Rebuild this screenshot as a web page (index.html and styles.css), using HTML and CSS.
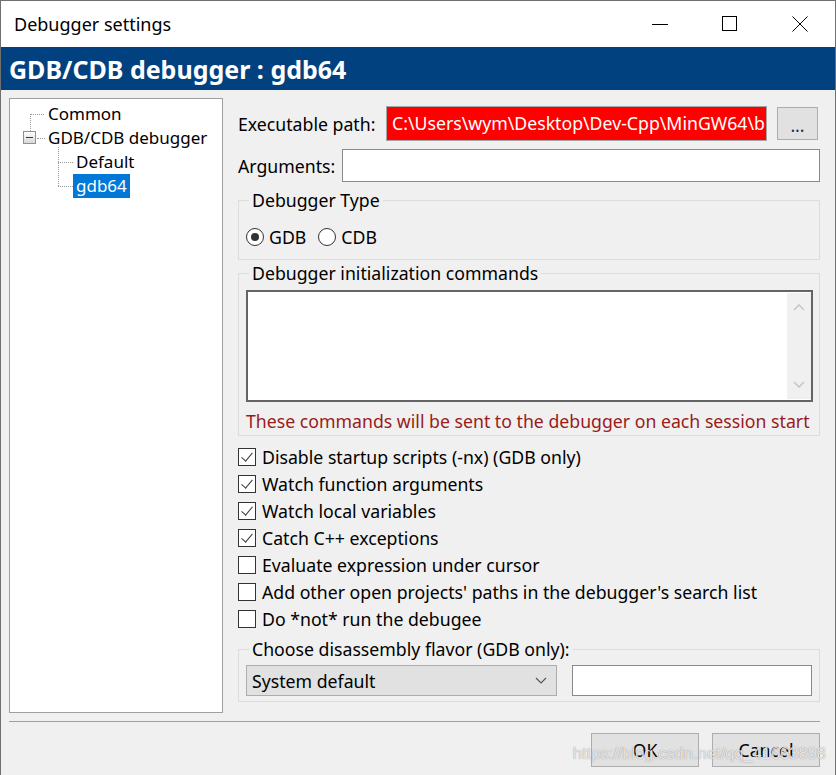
FILE: index.html
```html
<!DOCTYPE html>
<html lang="en">
<head>
    <meta charset="UTF-8">
    <title>Debugger settings</title>
    <link rel="stylesheet" href="styles.css">
</head>
<body>
<div class="window">
    <div class="titlebar">
        <span class="title">Debugger settings</span>
        <div class="caption-btn">
            <svg width="16" height="16" viewBox="0 0 16 16"><line x1="0" y1="8.5" x2="16" y2="8.5" stroke="#000" stroke-width="1"/></svg>
        </div>
        <div class="caption-btn">
            <svg width="16" height="16" viewBox="0 0 16 16"><rect x="0.5" y="0.5" width="14" height="14" fill="none" stroke="#000" stroke-width="1"/></svg>
        </div>
        <div class="caption-btn">
            <svg width="16" height="16" viewBox="0 0 16 16"><path d="M0.5 0.5 L15.5 15.5 M15.5 0.5 L0.5 15.5" stroke="#000" stroke-width="1" fill="none"/></svg>
        </div>
    </div>

    <div class="header">GDB/CDB debugger : gdb64</div>

    <div class="content">
        <div class="main">
            <div class="tree">
                <div class="node level1 first"><span class="label">Common</span></div>
                <div class="node level1 expanded"><span class="expander"></span><span class="label">GDB/CDB debugger</span></div>
                <div class="children">
                    <div class="node level2"><span class="label">Default</span></div>
                    <div class="node level2"><span class="label selected">gdb64</span></div>
                </div>
            </div>

            <div class="settings">
                <div class="row exec-row">
                    <span class="exec-label">Executable path:</span>
                    <div class="edit exec-path">C:\Users\wym\Desktop\Dev-Cpp\MinGW64\bin\gdb.exe</div>
                    <div class="button browse">...</div>
                </div>
                <div class="row args-row">
                    <span class="args-label">Arguments:</span>
                    <div class="edit args"></div>
                </div>

                <fieldset class="group type-group">
                    <legend>Debugger Type</legend>
                    <div class="radios">
                        <span class="radio checked"><span class="radio-circle"></span>GDB</span>
                        <span class="radio"><span class="radio-circle"></span>CDB</span>
                    </div>
                </fieldset>

                <fieldset class="group init-group">
                    <legend>Debugger initialization commands</legend>
                    <div class="memo">
                        <div class="memo-text"></div>
                        <div class="scrollbar">
                            <svg width="12" height="8" viewBox="0 0 12 8"><polyline points="1,7 6,2 11,7" fill="none" stroke="#c2c2c2" stroke-width="1.3"/></svg>
                            <svg width="12" height="8" viewBox="0 0 12 8"><polyline points="1,1 6,6 11,1" fill="none" stroke="#c2c2c2" stroke-width="1.3"/></svg>
                        </div>
                    </div>
                    <div class="hint">These commands will be sent to the debugger on each session start</div>
                </fieldset>

                <div class="checks">
                    <div class="check checked"><span class="box"></span>Disable startup scripts (-nx) (GDB only)</div>
                    <div class="check checked"><span class="box"></span>Watch function arguments</div>
                    <div class="check checked"><span class="box"></span>Watch local variables</div>
                    <div class="check checked"><span class="box"></span>Catch C++ exceptions</div>
                    <div class="check"><span class="box"></span>Evaluate expression under cursor</div>
                    <div class="check"><span class="box"></span>Add other open projects' paths in the debugger's search list</div>
                    <div class="check"><span class="box"></span>Do *not* run the debugee</div>
                </div>

                <fieldset class="group flavor-group">
                    <legend>Choose disassembly flavor (GDB only):</legend>
                    <div class="flavor-row">
                        <div class="combo">
                            <span>System default</span>
                            <svg width="12" height="8" viewBox="0 0 12 8"><polyline points="1,1 6,6 11,1" fill="none" stroke="#555" stroke-width="1.2"/></svg>
                        </div>
                        <div class="edit flavor-edit"></div>
                    </div>
                </fieldset>
            </div>
        </div>

        <div class="separator"></div>

        <div class="buttons">
            <div class="button">OK</div>
            <div class="button">Cancel</div>
        </div>
    </div>

    <div class="watermark">https://blog.csdn.net/qq_41663898</div>
</div>
</body>
</html>
```

FILE: styles.css
```css
* {
    box-sizing: border-box;
}

html, body {
    margin: 0;
    padding: 0;
}

body {
    width: 836px;
    height: 775px;
    overflow: hidden;
    font-family: "Noto Sans", "Open Sans", sans-serif;
    font-size: 17.7px;
    color: #000;
    background: #f0f0f0;
}

.window {
    position: relative;
    height: 775px;
    border: 1px solid #707070;
    border-bottom: none;
    background: #f0f0f0;
}

/* title bar */
.titlebar {
    height: 46px;
    background: #fff;
    display: flex;
    align-items: center;
}

.title {
    flex: 1;
    padding-left: 13px;
    font-size: 18px;
}

.caption-btn {
    width: 70px;
    height: 46px;
    display: flex;
    align-items: center;
    justify-content: center;
}

.caption-btn svg {
    display: block;
}

.header {
    height: 43px;
    background: #02417f;
    color: #fff;
    font-weight: bold;
    font-size: 25px;
    padding-left: 8px;
    display: flex;
    align-items: center;
}

.content {
    padding: 8px 15px 0 8px;
}

.main {
    display: flex;
    gap: 15px;
    height: 615px;
}

/* tree */
.tree {
    width: 214px;
    background: #fff;
    border: 1px solid #a0a0a0;
    padding-top: 3px;
    font-size: 17px;
}

.node {
    position: relative;
    height: 24px;
    display: flex;
    align-items: center;
}

.level1 {
    padding-left: 35px;
}

.level2 {
    padding-left: 63px;
}

.label {
    padding: 0 3px;
    line-height: 24px;
}

.label.selected {
    background: #0078d7;
    color: #fff;
}

.node::before {
    content: "";
    position: absolute;
    top: 12px;
    left: 20px;
    width: 14px;
    border-top: 1px dotted #9a9a9a;
}

.node.expanded::before {
    left: 27px;
    width: 8px;
}

.node.first::after {
    content: "";
    position: absolute;
    left: 20px;
    top: 12px;
    height: 17px;
    border-left: 1px dotted #9a9a9a;
}

.expander {
    position: absolute;
    left: 13px;
    top: 5px;
    width: 13px;
    height: 13px;
    border: 1px solid #919191;
    background: linear-gradient(#ffffff, #d8d8d8);
}

.expander::after {
    content: "";
    position: absolute;
    left: 2px;
    top: 5px;
    width: 7px;
    height: 1px;
    background: #1f3a66;
}

.children {
    position: relative;
}

.children::before {
    content: "";
    position: absolute;
    left: 48px;
    top: -3px;
    bottom: 12px;
    border-left: 1px dotted #9a9a9a;
}

.level2::before {
    left: 48px;
    width: 15px;
}

/* settings column */
.settings {
    flex: 1;
    padding-top: 8px;
}

.row {
    display: flex;
    align-items: center;
}

.exec-row {
    height: 35px;
}

.exec-label {
    width: 148px;
}

.edit {
    background: #fff;
    border: 1px solid #8a8a8a;
}

.exec-path {
    width: 381px;
    height: 35px;
    background: #ff0000;
    border-color: #a5a5a5;
    color: #fff;
    padding-left: 5px;
    line-height: 33px;
    white-space: nowrap;
    overflow: hidden;
}

.button {
    background: #e1e1e1;
    border: 1px solid #adadad;
    display: flex;
    align-items: center;
    justify-content: center;
}

.browse {
    width: 41px;
    height: 33px;
    margin-left: 10px;
    padding-top: 2px;
    color: #1c2f55;
}

.args-row {
    margin-top: 8px;
    height: 33px;
}

.args-label {
    width: 104px;
}

.args {
    flex: 1;
    height: 33px;
}

/* group boxes */
.group {
    margin: 0;
    border: 1px solid #dcdcdc;
    padding: 0 6px 0 7px;
    min-width: 0;
}

.group legend {
    padding: 0 3px;
    margin-left: 3px;
    line-height: 20px;
}

.type-group {
    margin-top: 8px;
    padding-top: 17px;
    padding-bottom: 12px;
}

.radios {
    display: flex;
    align-items: center;
    height: 20px;
}

.radio {
    display: flex;
    align-items: center;
    gap: 5px;
}

.radio + .radio {
    margin-left: 12px;
}

.radio-circle {
    width: 18px;
    height: 18px;
    border: 1px solid #333;
    border-radius: 50%;
    background: #fff;
    display: flex;
    align-items: center;
    justify-content: center;
}

.radio.checked .radio-circle::after {
    content: "";
    width: 8px;
    height: 8px;
    border-radius: 50%;
    background: #333;
}

.init-group {
    margin-top: 3px;
    padding-top: 7px;
    padding-bottom: 4px;
}

.memo {
    height: 112px;
    background: #fff;
    border: 2px solid #646464;
    display: flex;
}

.memo-text {
    flex: 1;
}

.scrollbar {
    width: 24px;
    margin: 1px 0;
    background: #f0f0f0;
    display: flex;
    flex-direction: column;
    justify-content: space-between;
    align-items: center;
    padding: 10px 0;
}

.scrollbar svg {
    display: block;
}

.hint {
    margin-top: 9px;
    line-height: 20px;
    color: #9a1b1b;
    white-space: nowrap;
}

/* check boxes */
.checks {
    margin-top: 7px;
}

.check {
    height: 27px;
    display: flex;
    align-items: center;
    gap: 6px;
}

.box {
    width: 18px;
    height: 18px;
    border: 1px solid #333;
    background: #fff;
    position: relative;
}

.check.checked .box::after {
    content: "";
    position: absolute;
    left: 5px;
    top: 1px;
    width: 5px;
    height: 10px;
    border-right: 1.5px solid #3a3a3a;
    border-bottom: 1.5px solid #3a3a3a;
    transform: rotate(40deg);
}

.flavor-group {
    margin-top: 7px;
    padding-top: 6px;
    padding-bottom: 5px;
}

.flavor-row {
    display: flex;
    gap: 15px;
}

.combo {
    width: 311px;
    height: 31px;
    background: #e1e1e1;
    border: 1px solid #adadad;
    padding: 0 9px 0 5px;
    display: flex;
    align-items: center;
    justify-content: space-between;
}

.flavor-edit {
    width: 240px;
    height: 31px;
}

/* bottom */
.separator {
    margin-top: 8px;
    border-top: 1px solid #a0a0a0;
}

.buttons {
    margin-top: 11px;
    display: flex;
    justify-content: flex-end;
    gap: 13px;
}

.buttons .button {
    width: 108px;
    height: 34px;
}

.watermark {
    position: absolute;
    right: 9px;
    bottom: 12px;
    font-family: "Liberation Sans", Arial, sans-serif;
    font-size: 16.5px;
    line-height: 20px;
    color: rgba(255, 255, 255, 0.8);
    text-shadow: 0 0 1px rgba(90, 90, 90, 0.8);
}
```
